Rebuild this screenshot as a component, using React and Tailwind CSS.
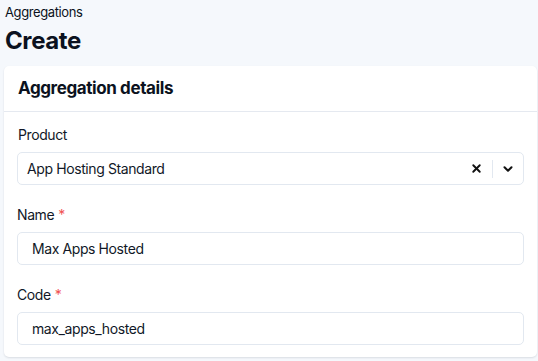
import {X, ChevronDown} from "lucide-react";

function Label({children, required}) {
    return (
        <label className="block text-[14px] leading-5 text-[#111827]">
            {children}
            {required && <span className="ml-1 text-[#f05252]">*</span>}
        </label>
    );
}

function TextField({label, value, required}) {
    return (
        <div className="flex flex-col gap-[7px]">
            <Label required={required}>{label}</Label>
            <div className="flex h-[33px] items-center rounded-[5px] border border-[#e2e8f0] bg-white px-[14px] text-[14px] text-[#111827]">
                {value}
            </div>
        </div>
    );
}

export default function App() {
    return (
        <div
            className="min-h-[361px] bg-[#f5f8fc] pl-[4px] pr-[1px] pt-[4px] tracking-[-0.025em] text-[#0b1220]"
            style={{fontFamily: "Inter, 'Noto Sans', sans-serif"}}
        >
            <p className="pl-[1px] text-[13px] leading-4">Aggregations</p>
            <h1 className="mt-[6px] pl-[1px] text-[24px] font-bold leading-[30px]">Create</h1>

            <div className="mt-[10px] rounded-[5px] bg-white shadow-[0_1px_2px_rgba(15,23,42,0.12)]">
                <div className="flex h-[46px] items-center border-b border-[#e5e9f0] px-[14px]">
                    <h2 className="text-[17px] font-bold">Aggregation details</h2>
                </div>

                <div className="flex flex-col gap-[20px] px-[13px] pb-[12px] pt-[13px]">
                    <div className="flex flex-col gap-[7px]">
                        <div className="pl-[1px]">
                            <Label>Product</Label>
                        </div>
                        <div className="flex h-[33px] items-center rounded-[5px] border border-[#e2e8f0] bg-white pl-[9px] text-[14px] text-[#111827]">
                            <span className="flex-1">App Hosting Standard</span>
                            <button className="flex h-full w-[24px] items-center justify-center">
                                <X size={13} strokeWidth={3.5} className="text-[#111]" />
                            </button>
                            <span className="mx-[4px] h-[18px] w-px bg-[#e2e8f0]" />
                            <button className="flex h-full w-[26px] items-center justify-center pr-[4px]">
                                <ChevronDown size={14} strokeWidth={3.5} className="text-[#111]" />
                            </button>
                        </div>
                    </div>

                    <TextField label="Name" value="Max Apps Hosted" required />
                    <TextField label="Code" value="max_apps_hosted" required />
                </div>
            </div>
        </div>
    );
}
